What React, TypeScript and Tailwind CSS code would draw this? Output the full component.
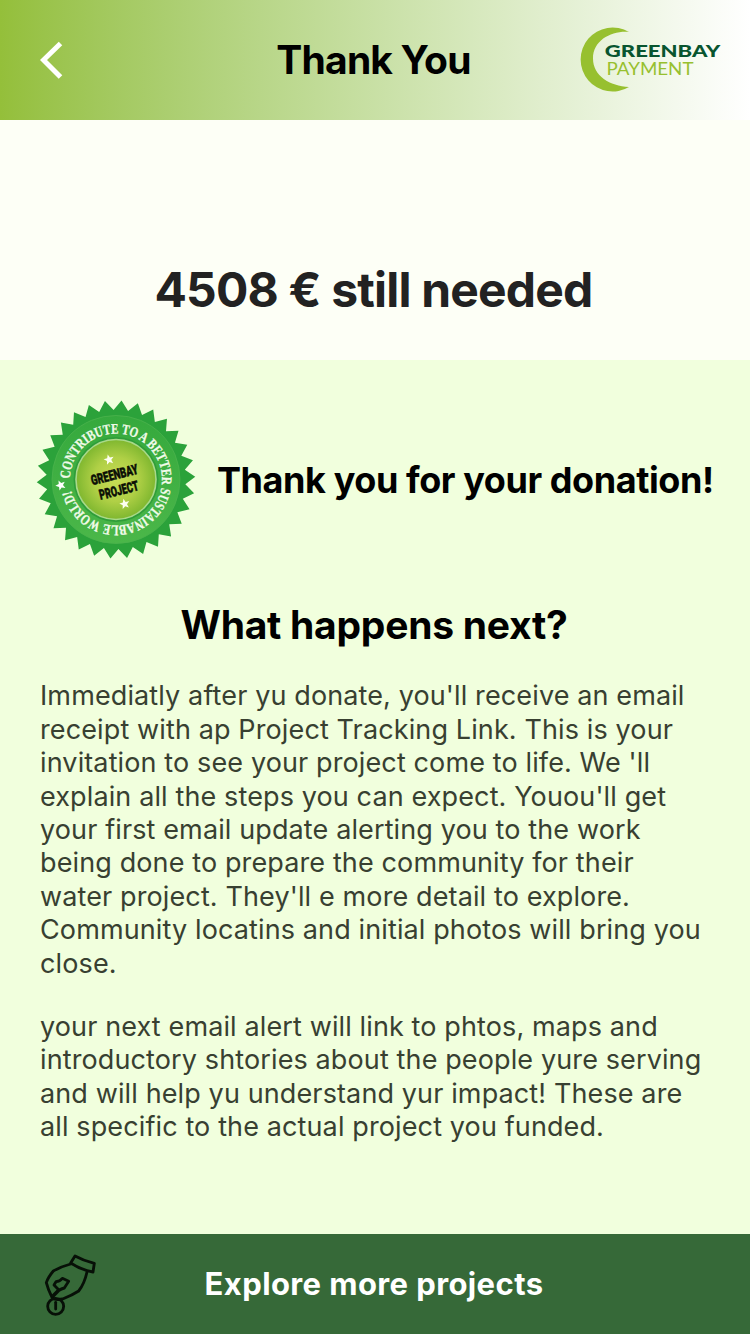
import type { ReactNode } from "react";

const nextSteps = [
    "Immediatly after yu donate, you'll receive an email",
    "receipt with ap Project Tracking Link. This is your",
    "invitation to see your project come to life. We 'll",
    "explain all the steps you can expect. Youou'll get",
    "your first email update alerting you to the work",
    "being done to prepare the community for their",
    "water project. They'll e more detail to explore.",
    "Community locatins and initial photos will bring you",
    "close."
]

const nextAlert = [
    "your next email alert will link to phtos, maps and",
    "introductory shtories about the people yure serving",
    "and will help yu understand yur impact! These are",
    "all specific to the actual project you funded."
]

// 30 teeth around the seal
const sealPoints = Array.from({length: 60}, (_, i) => {
    const angle = ((-2 + i * 6) * Math.PI) / 180
    const r = i % 2 === 0 ? 79.3 : 69.5
    return `${(86 + r * Math.cos(angle)).toFixed(2)},${(89.5 + r * Math.sin(angle)).toFixed(2)}`
}).join(" ")

const star = "0,-5.4 1.4,-1.8 5.1,-1.7 2.2,0.7 3.2,4.4 0,2.3 -3.2,4.4 -2.2,0.7 -5.1,-1.7 -1.4,-1.8"

function Logo() {
    return (
        <svg width="180" height="90" viewBox="0 0 180 90" className="shrink-0">
            <path d="M59 17A32 32 0 1 0 59 72C40 71 23 61 23 43.5C23 25 42 15.5 59 17Z" fill="#97c02f" />
            <text x="34.8" y="42.3" textLength="115.5" lengthAdjust="spacingAndGlyphs" fill="#08552f" className="font-['Lato',sans-serif] text-[17.5px] font-black">GREENBAY</text>
            <text x="36.5" y="60" textLength="87" lengthAdjust="spacingAndGlyphs" fill="#97c02f" className="font-['Lato',sans-serif] text-[17px]">PAYMENT</text>
        </svg>
    );
}

function Seal() {
    return (
        <svg width="160" height="160" viewBox="6 10 160 160" className="shrink-0">
            <defs>
                <radialGradient id="sealCore">
                    <stop offset="0%" stopColor="#c9dc55" />
                    <stop offset="55%" stopColor="#b0d046" />
                    <stop offset="100%" stopColor="#7fb72f" />
                </radialGradient>
                <linearGradient id="sealBand" x1="0" y1="0" x2="0" y2="1">
                    <stop offset="0%" stopColor="#35a93d" />
                    <stop offset="100%" stopColor="#4bb749" />
                </linearGradient>
                <path id="sealText" d="M40 89.5A46 46 0 1 1 40 89.6" />
            </defs>
            <polygon points={sealPoints} fill="#2ba23a" />
            <circle cx="86" cy="89.5" r="64" fill="url(#sealBand)" stroke="#4bb34d" strokeWidth="0.8" />
            <circle cx="86" cy="89.5" r="42.5" fill="#2f9d3a" />
            <circle cx="86" cy="89.5" r="40" fill="url(#sealCore)" stroke="#a9d98a" strokeWidth="1.6" />
            <text fill="#f1fbe9" stroke="#f1fbe9" strokeWidth="0.3" className="font-['Liberation_Serif',serif] text-[14.5px] font-bold">
                <textPath href="#sealText" startOffset="1" textLength="276" lengthAdjust="spacingAndGlyphs">CONTRIBUTE TO A BETTER SUSTAINABLE WORLD!</textPath>
            </text>
            <polygon points={star} fill="#fff" transform="translate(30.7 95.3) rotate(-96)" />
            <polygon points={star} fill="#fdfff0" transform="translate(79 69.7) rotate(-14)" />
            <polygon points={star} fill="#fdfff0" transform="translate(94.7 114) rotate(-14)" />
            <g fill="#0b0f05" stroke="#0b0f05" strokeWidth="0.5" transform="rotate(-14 86 89.5)" className="font-['Roboto',sans-serif] text-[14px] font-black">
                <text x="61.5" y="89.3" textLength="48" lengthAdjust="spacingAndGlyphs">GREENBAY</text>
                <text x="66" y="105.5" textLength="40" lengthAdjust="spacingAndGlyphs">PROJECT</text>
            </g>
        </svg>
    );
}

function DonateIcon() {
    return (
        <svg width="90" height="95" viewBox="0 0 270 285" fill="none" stroke="#071007" strokeWidth="8.5" strokeLinecap="round" strokeLinejoin="round" className="-mt-[2px] shrink-0">
            <path d="M135 60Q160 74 193 82L189 108Q152 101 122 81Z" />
            <path d="M122 84Q92 92 70 105Q54 124 49 140Q55 163 65 182Q72 194 98 189Q126 178 146 165Q163 144 171 108" />
            <path d="M68 179L86 161L72 147L78 137Q90 136 97 127L116 136L103 156Q94 158 86 164L70 181" />
            <circle cx="77" cy="211" r="24" />
            <path d="M77 199V219" />
        </svg>
    );
}

function Lines({lines}: {lines: string[]}) {
    return (
        <p className="text-[27px] leading-[33.4px] tracking-[0.12px] whitespace-nowrap text-[#384031]">
            {lines.map((line) => <span key={line} className="block">{line}</span>)}
        </p>
    );
}

function Heading({children}: {children: ReactNode}) {
    return <h2 className="text-center text-[39px] leading-[48px] font-bold tracking-[-0.25px] text-black">{children}</h2>
}

export default function App() {
    return (
        <div className="flex h-[1334px] w-[750px] flex-col overflow-hidden bg-[#f1ffdd] font-['Inter',sans-serif]">
            <header className="flex h-[120px] shrink-0 items-center justify-between bg-linear-to-r from-[#94bf3a] to-white">
                <button className="flex w-[180px] pl-[40px]" aria-label="Back">
                    <svg width="24" height="40" viewBox="0 0 24 40" fill="none" stroke="#fff" strokeWidth="5">
                        <path d="M20.5 3.5L3.5 20L20.5 37" />
                    </svg>
                </button>
                <h1 className="pr-[3px] text-[39px] font-bold tracking-[-0.8px] text-black">Thank You</h1>
                <Logo />
            </header>
            <section className="flex h-[240px] shrink-0 items-end justify-center bg-[#fdfff6] pr-[3px] pb-[40px]">
                <p className="text-[48px] leading-[60px] font-bold tracking-[-0.8px] text-[#222]">4508 € still needed</p>
            </section>
            <main className="grow">
                <div className="flex items-center gap-[21px] pt-10 pl-9">
                    <Seal />
                    <p className="text-[36px] font-bold tracking-[-0.42px] whitespace-nowrap text-black">Thank you for your donation!</p>
                </div>
                <div className="pt-[41px] pr-[2px]">
                    <Heading>What happens next?</Heading>
                </div>
                <div className="flex flex-col gap-[30px] px-10 pt-[30.4px]">
                    <Lines lines={nextSteps} />
                    <Lines lines={nextAlert} />
                </div>
            </main>
            <button className="flex h-[100px] shrink-0 items-center bg-[#366938] pl-[30px]">
                <DonateIcon />
                <span className="grow pr-[122px] text-center text-[31px] font-bold tracking-[0.4px] text-white">Explore more projects</span>
            </button>
        </div>
    );
}
